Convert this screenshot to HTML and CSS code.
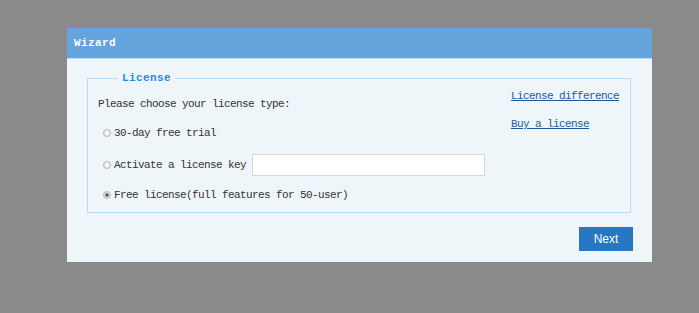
FILE: index.html
```html
<!DOCTYPE html>
<html lang="en">
<head>
  <meta charset="UTF-8">
  <title>Wizard</title>
  <link rel="stylesheet" href="styles.css">
</head>
<body>

  <div id="wizard">
    <div class="wizard-header">Wizard</div>
    <div class="wizard-body">
      <fieldset class="license-box">
        <legend>License</legend>
        <div class="license-content">
          <div class="license-main">
            <p class="prompt">Please choose your license type:</p>
            <label class="choice">
              <input type="radio" name="license" value="trial">
              <span>30-day free trial</span>
            </label>
            <label class="choice choice-key">
              <input type="radio" name="license" value="key">
              <span>Activate a license key</span>
              <input type="text" class="key-input">
            </label>
            <label class="choice">
              <input type="radio" name="license" value="free" checked>
              <span>Free license(full features for 50-user)</span>
            </label>
          </div>
          <div class="license-links">
            <a href="#">License difference</a>
            <a href="#">Buy a license</a>
          </div>
        </div>
      </fieldset>
      <div class="actions">
        <button id="next-btn">Next</button>
      </div>
    </div>
  </div>

</body>
</html>
```

FILE: styles.css
```css
body {
  margin: 0;
  background: #8a8a8a;
  font-family: "Liberation Mono", "DejaVu Sans Mono", monospace;
  font-size: 11px;
  letter-spacing: -0.6px;
  color: #333;
}

#wizard {
  width: 585px;
  margin: 28px 0 0 67px;
  background: #eef6fa;
}

.wizard-header {
  height: 30px;
  line-height: 30px;
  padding-left: 7px;
  background: #64a4dc;
  border-bottom: 1px solid #b9dcf4;
  color: #fff;
  font-weight: bold;
  letter-spacing: 0.4px;
}

.wizard-body {
  padding: 12px 21px 11px 20px;
}

.license-box {
  margin: 0;
  padding: 0 11px 2px 10px;
  border: 1px solid #b5dcf6;
  min-width: 0;
}

.license-box legend {
  margin-left: 20px;
  padding: 0 4px;
  line-height: 14px;
  color: #1e8ae6;
  font-weight: bold;
  letter-spacing: 0.4px;
}

.license-content {
  display: flex;
}

.license-main {
  flex: 1;
}

.prompt {
  margin: 12px 0 7px 0;
  line-height: 14px;
}

.choice {
  display: flex;
  align-items: center;
  height: 30px;
  padding-left: 5px;
}

.choice-key {
  margin-top: 2px;
}

.choice input[type="radio"] {
  appearance: none;
  width: 8px;
  height: 8px;
  margin: 0 3px 0 0;
  border: 1px solid #b4b4b4;
  border-radius: 50%;
  background: radial-gradient(circle, #fff 0, #e4e4e4 100%);
}

.choice input[type="radio"]:checked {
  background: radial-gradient(circle, #555 0, #666 35%, #e8e8e8 45%, #d6d6d6 100%);
}

.key-input {
  width: 231px;
  height: 20px;
  margin: 0 0 0 6px;
  padding: 0;
  border: 1px solid #d6d6d6;
  background: #fff;
}

.license-links {
  display: flex;
  flex-direction: column;
  gap: 14px;
  padding-top: 4px;
}

.license-links a {
  line-height: 14px;
  color: #1a5ba0;
}

.actions {
  display: flex;
  justify-content: flex-end;
  margin: 14px -2px 0 0;
}

#next-btn {
  width: 54px;
  height: 24px;
  border: none;
  background: #2676c2;
  color: #fff;
  font-family: "Liberation Sans", Arial, sans-serif;
  font-size: 12px;
  letter-spacing: 0;
  cursor: pointer;
}
```
